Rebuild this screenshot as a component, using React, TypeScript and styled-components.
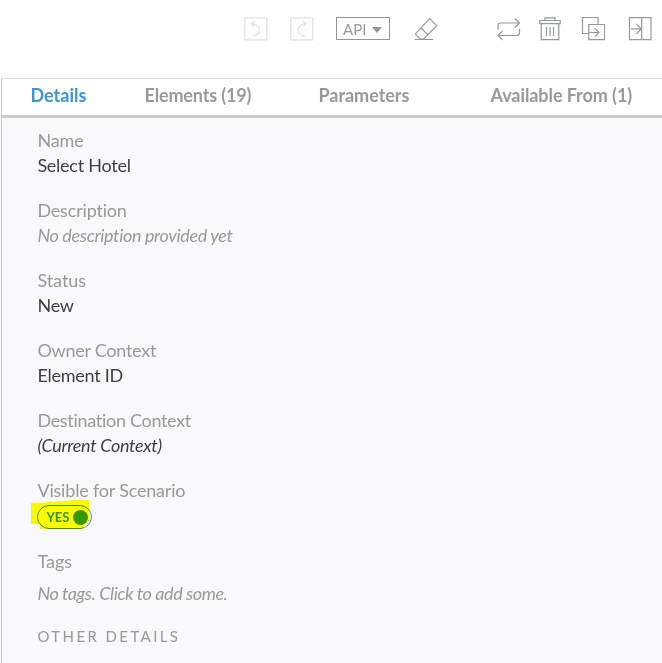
import React from "react";
import styled, { createGlobalStyle, css } from "styled-components";

const GlobalStyle = createGlobalStyle`
  * { box-sizing: border-box; }
  body {
    margin: 0;
    background: #fff;
    overflow: hidden;
    font-family: Lato, "Liberation Sans", sans-serif;
    font-variant-ligatures: none;
  }
`;

const Page = styled.div`
  width: 662px;
  height: 663px;
  display: flex;
  flex-direction: column;
  background: #fff;
`;

const Toolbar = styled.header`
  height: 78px;
  padding: 17px 0 0 244px;
  display: flex;
  align-items: flex-start;
`;

const ToolButton = styled.button<{ $gap: number; $disabled?: boolean }>`
  width: 24px;
  height: 24px;
  flex: none;
  padding: 0;
  margin: 0 ${(p) => p.$gap}px 0 0;
  border: 0;
  background: none;
  color: ${(p) => (p.$disabled ? "#e2e2e2" : "#949a9f")};
  svg {
    display: block;
    overflow: visible;
  }
`;

const ApiButton = styled.button`
  width: 54px;
  height: 23px;
  flex: none;
  margin: 0 24px 0 0;
  padding: 0 7px 0 6px;
  display: flex;
  align-items: center;
  justify-content: space-between;
  border: 1px solid #8f969c;
  background: #fff;
  color: #999;
  font: 400 15px/20px Lato, sans-serif;
`;

const Caret = styled.i`
  border: 5px solid transparent;
  border-top: 6px solid #8f969c;
  border-bottom: 0;
  margin-top: 2px;
`;

const Panel = styled.section`
  flex: 1;
  margin-left: 1px;
  border-top: 1px solid #ddd;
  border-left: 1px solid #c8cbce;
  background: #f9f9fb;
`;

const Tabs = styled.nav`
  height: 39px;
  padding-left: 28.5px;
  display: flex;
  background: #fff;
  border-bottom: 3px solid #ccc;
`;

const Tab = styled.a<{ $width: number; $spacing: number; $active?: boolean }>`
  width: ${(p) => p.$width}px;
  flex: none;
  white-space: nowrap;
  font-size: 18px;
  font-weight: 700;
  line-height: 33px;
  letter-spacing: ${(p) => p.$spacing}px;
  color: ${(p) => (p.$active ? "#3b94d9" : "#999")};
`;

const Details = styled.dl`
  margin: 0;
  padding: 10px 0 0 35.4px;
  font-size: 18px;
  line-height: 25px;
`;

const Field = styled.div<{ $height?: number }>`
  height: ${(p) => p.$height ?? 70}px;
`;

const Label = styled.dt<{ $spacing?: number }>`
  color: #999;
  letter-spacing: ${(p) => p.$spacing ?? 0}px;
`;

const Value = styled.dd<{ $italic?: boolean; $muted?: boolean; $top?: number; $spacing?: number }>`
  margin: ${(p) => p.$top ?? 0}px 0 0;
  letter-spacing: ${(p) => p.$spacing ?? 0}px;
  color: ${(p) => (p.$muted ? "#999" : "#3c3f43")};
  ${(p) => p.$italic && css`font-style: italic;`}
`;

const ToggleWrap = styled.div`
  position: relative;
  width: 55px;
  height: 24px;
  margin-top: 2px;
`;

const Toggle = styled.div`
  width: 55px;
  height: 24px;
  padding: 0 3px 0 8px;
  display: flex;
  align-items: center;
  justify-content: space-between;
  border: 1px solid #3b94d9;
  border-radius: 12px;
  background: #fff;
  color: #3498db;
  font-size: 13px;
  font-weight: 700;
`;

const Knob = styled.span`
  width: 15px;
  height: 15px;
  border-radius: 50%;
  background: #3498db;
`;

const Highlight = styled.svg`
  position: absolute;
  left: -6px;
  top: -5px;
  mix-blend-mode: multiply;
`;

const SectionTitle = styled.h2`
  margin: 0;
  font-size: 15px;
  font-weight: 400;
  line-height: 22px;
  letter-spacing: 2.4px;
  color: #999;
`;

const Icon = ({ children }: { children: React.ReactNode }) => (
  <svg width="24" height="24" viewBox="0 0 24 24" fill="none" stroke="currentColor" strokeWidth="1.2">
    {children}
  </svg>
);

const tabs = [
  { name: "Details", width: 114, spacing: 0, active: true },
  { name: "Elements (19)", width: 174, spacing: -0.15 },
  { name: "Parameters", width: 172, spacing: -0.03 },
  { name: "Available From (1)", width: 160, spacing: -0.08 },
];

const fields = [
  { label: "Name", labelSpacing: -0.1, value: "Select Hotel", spacing: -0.25 },
  {
    label: "Description",
    labelSpacing: -0.18,
    value: "No description provided yet",
    spacing: -0.36,
    italic: true,
    muted: true,
  },
  { label: "Status", labelSpacing: -0.05, value: "New", spacing: -0.2 },
  { label: "Owner Context", labelSpacing: -0.26, value: "Element ID", spacing: -0.25 },
  {
    label: "Destination Context",
    labelSpacing: -0.3,
    value: "(Current Context)",
    spacing: -0.3,
    italic: true,
  },
];

export default function App() {
  return (
    <Page>
      <GlobalStyle />
      <Toolbar>
        <ToolButton $gap={22} $disabled aria-label="Undo">
          <Icon>
            <path d="M.8.8h22v22H.8zM11.200 4 7.700 6.300l2.500 3.700M7.700 6.300C17 8 18.500 17.500 8.500 19" />
          </Icon>
        </ToolButton>
        <ToolButton $gap={22} $disabled aria-label="Redo">
          <Icon>
            <path d="M.8.8h22v22H.8zM12.300 4l3.500 2.300-2.500 3.700M15.800 6.300C6.500 8 5 17.500 15 19" />
          </Icon>
        </ToolButton>
        <ApiButton>
          API
          <Caret />
        </ApiButton>
        <ToolButton $gap={59} aria-label="Clear">
          <Icon>
            <path d="m2.100 16.200 13.600-14.700 7.200 7.200L9.500 22H6.200L1.500 17.300zM7 11l7 7M.5 22.500h18.500" />
          </Icon>
        </ToolButton>
        <ToolButton $gap={19} aria-label="Swap">
          <Icon>
            <path d="M1 12.700V8.500Q1 6 3.500 6H22M18 1.500 22.500 6 18 10.500M22.500 11.700V16q0 2.500-2.500 2.500H1M5.500 14 1 18.500 5.500 23" />
          </Icon>
        </ToolButton>
        <ToolButton $gap={18} aria-label="Delete">
          <Icon>
            <path d="M-.2 3.500h20.400v3.200H-.2zM5 3.200V.8h10v2.400M1.200 6.800v15.900h17.600V6.800M6.500 10v9M10 10v9M13.500 10v9" />
          </Icon>
        </ToolButton>
        <ToolButton $gap={23} aria-label="Copy to">
          <Icon>
            <path d="M6.700 16.500H.5V.5h15.500v6.300M6.700 7.500h15.800v15.200H6.700zM6.700 15.500h10.300M12.800 11.200 17 15.500l-4.200 4.200" />
          </Icon>
        </ToolButton>
        <ToolButton $gap={0} aria-label="Collapse panel">
          <Icon>
            <path d="M.5.700h21.500v21.900H.5zM12.700.7v21.900M2 11.900h10.200M7.200 6.800l5.100 5.100-5.100 5.100" />
          </Icon>
        </ToolButton>
      </Toolbar>
      <Panel>
        <Tabs>
          {tabs.map((t) => (
            <Tab key={t.name} $width={t.width} $spacing={t.spacing} $active={t.active}>
              {t.name}
            </Tab>
          ))}
        </Tabs>
        <Details>
          {fields.map((f) => (
            <Field key={f.label}>
              <Label $spacing={f.labelSpacing}>{f.label}</Label>
              <Value $italic={f.italic} $muted={f.muted} $spacing={f.spacing}>
                {f.value}
              </Value>
            </Field>
          ))}
          <Field $height={71}>
            <Label $spacing={-0.19}>Visible for Scenario</Label>
            <ToggleWrap>
              <Toggle>
                YES
                <Knob />
              </Toggle>
              <Highlight width="60" height="30" viewBox="0 0 60 30">
                <path fill="#ff0" d="M0 3h15V2l23-1V0h20v21l-3 2-3 6H9v-5H0z" />
              </Highlight>
            </ToggleWrap>
          </Field>
          <Field $height={76}>
            <Label>Tags</Label>
            <Value $italic $muted $top={7} $spacing={-0.43}>
              No tags. Click to add some.
            </Value>
          </Field>
          <SectionTitle>OTHER DETAILS</SectionTitle>
        </Details>
      </Panel>
    </Page>
  );
}
